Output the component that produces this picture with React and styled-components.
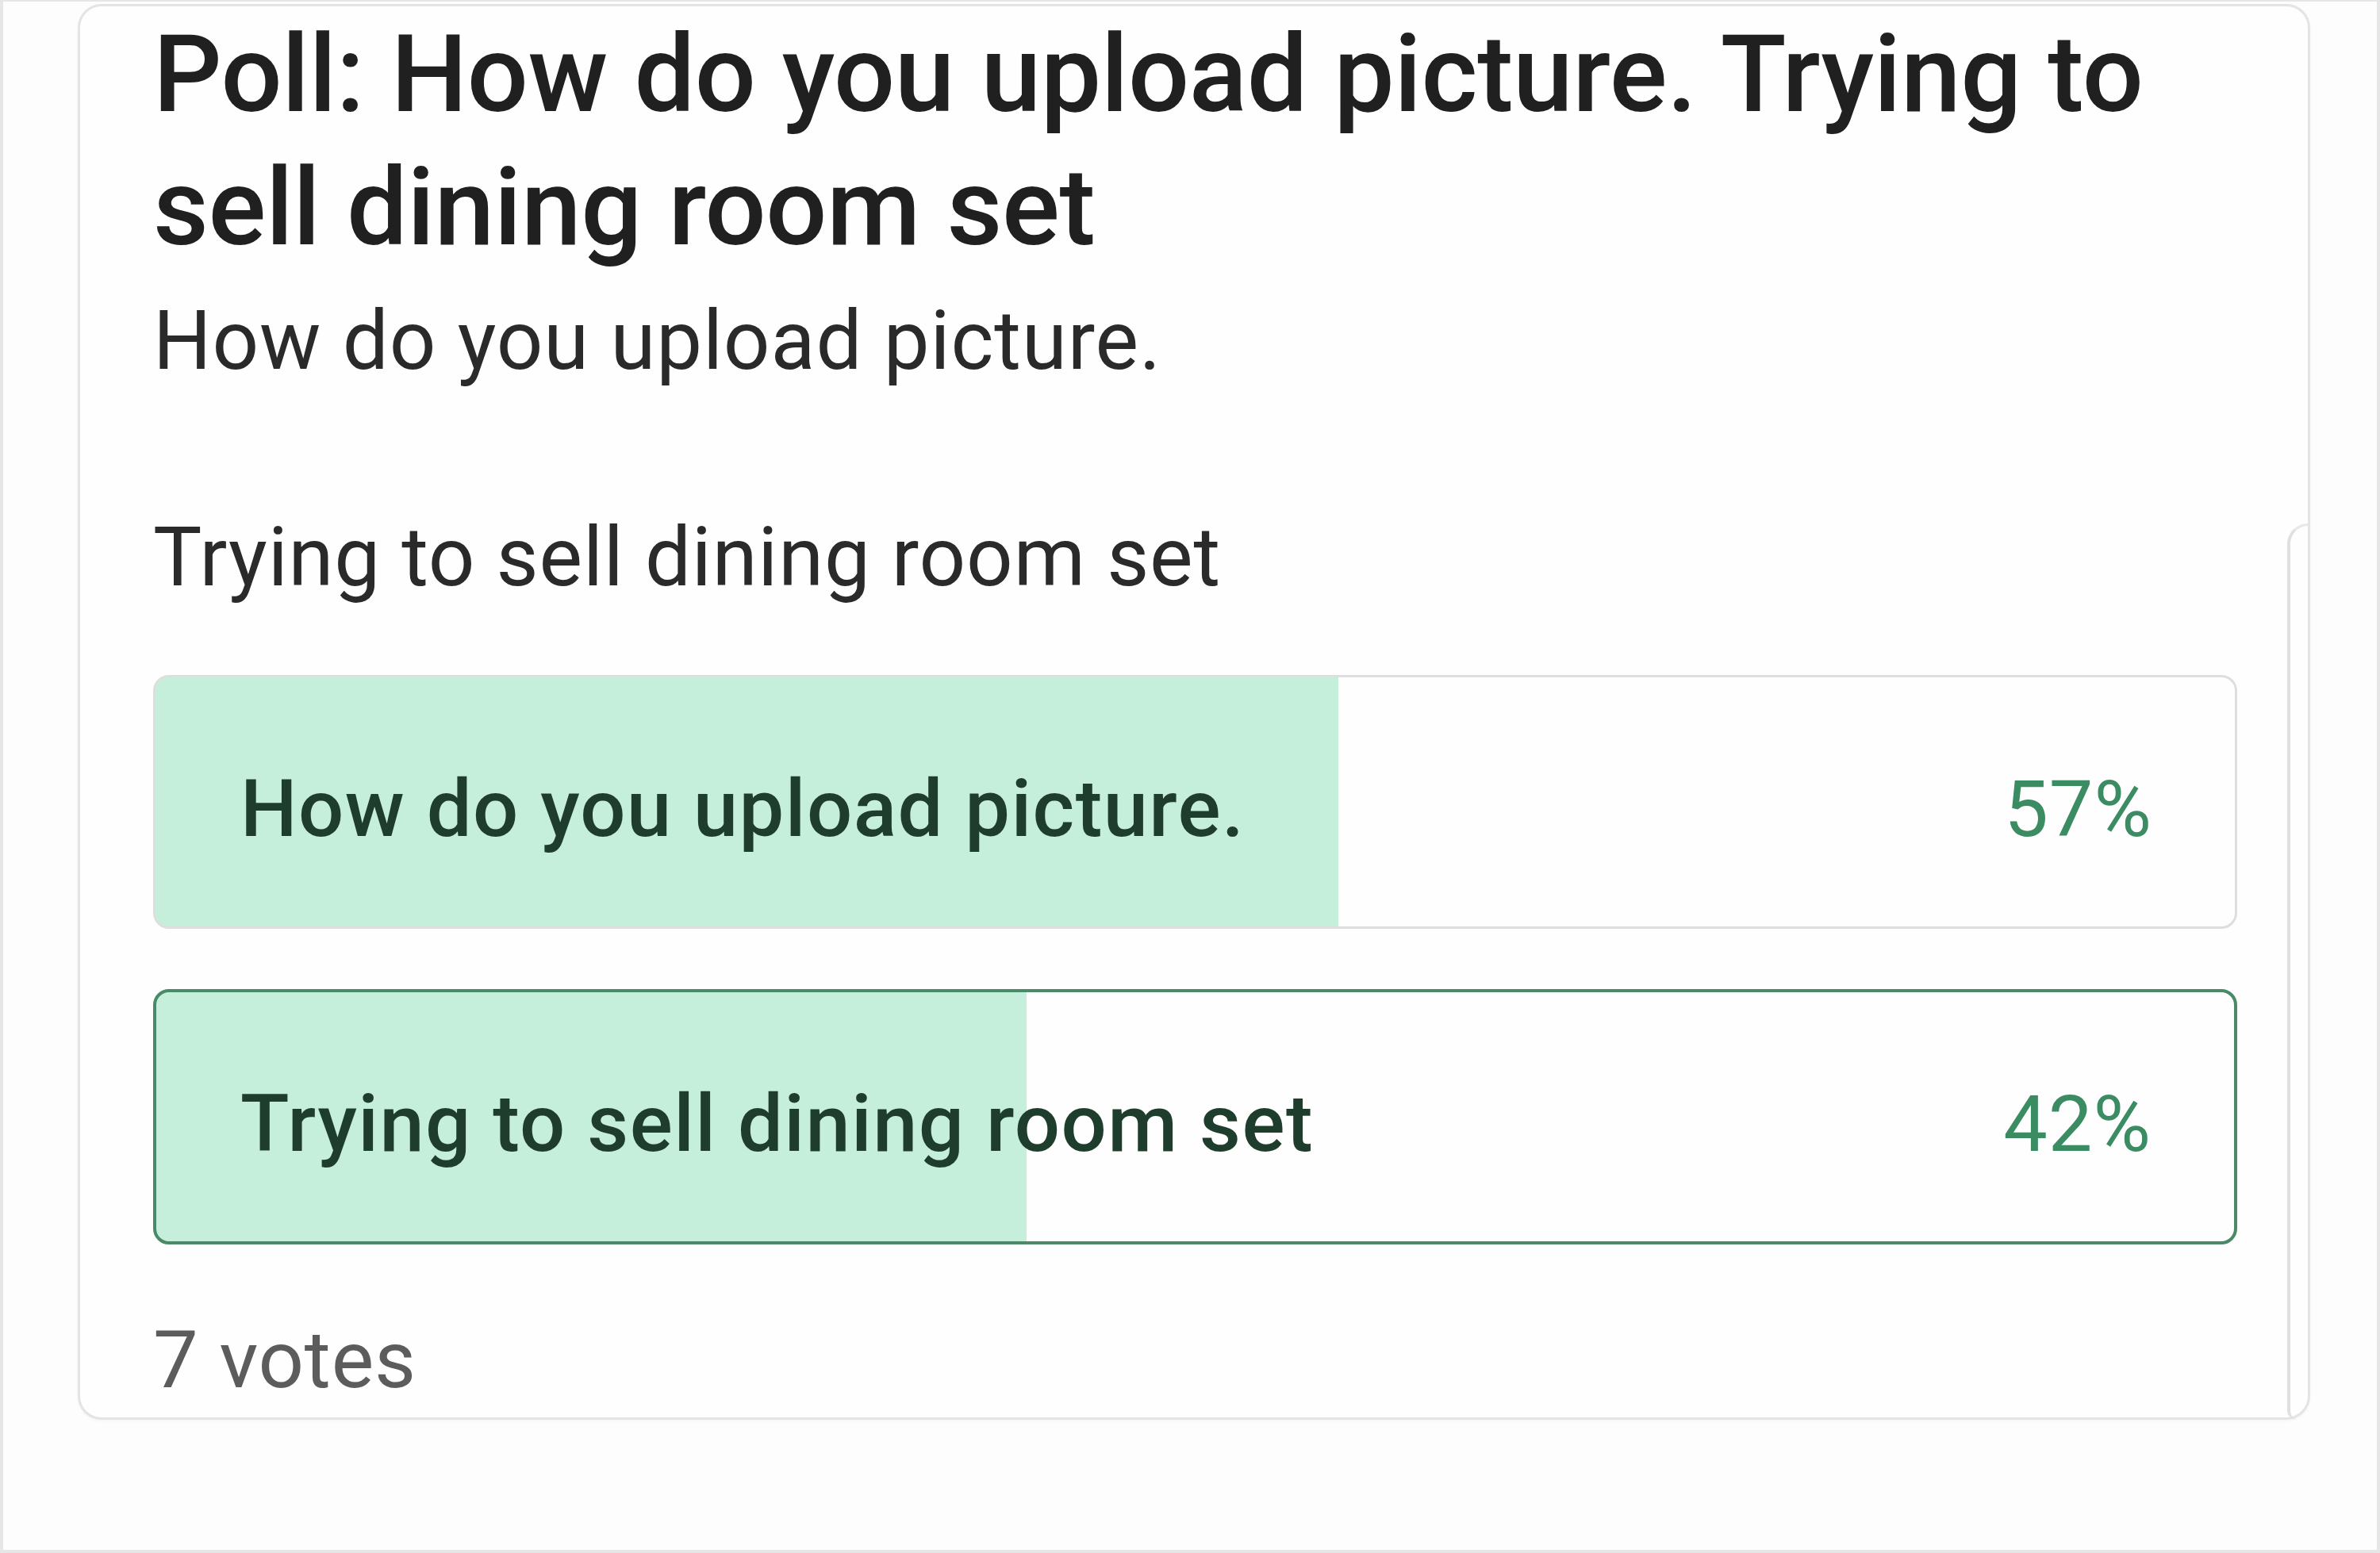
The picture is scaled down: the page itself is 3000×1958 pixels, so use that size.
import styled, { createGlobalStyle } from "styled-components";

const GlobalStyle = createGlobalStyle`
    body{
        margin: 0;
        background: #ffffff;
        font-family: Roboto, "Noto Sans", "Liberation Sans", sans-serif;
    }
`;

const Frame = styled.div`
    box-sizing: border-box;
    width: 3000px;
    height: 1958px;
    border: 4px solid #e6e6e6;
    border-top-width: 2px;
    background: #fdfdfd;
    padding: 0 84px 0 94px;
`;

const Card = styled.div`
    position: relative;
    box-sizing: border-box;
    display: flex;
    flex-direction: column;
    border: 3px solid #e4e4e4;
    border-radius: 30px;
    background: #fefefe;
    padding: 2px 89px 12px 92px;
    margin-top: 3px;
    box-shadow: 0 2px 4px rgba(0,0,0,0.03);

    /* the odd inner edge on the right of the original shot */
    &::after{
        content: "";
        position: absolute;
        right: 0;
        top: 652px;
        bottom: -3px;
        width: 22px;
        border-left: 4px solid #e0e0e0;
        border-top: 3px solid #e8e8e8;
        border-top-left-radius: 26px;
        border-bottom-left-radius: 12px;
    }
`;

const Title = styled.h1`
    margin: 0;
    font-size: 136px;
    line-height: 168px;
    font-weight: 500;
    color: #202020;
    letter-spacing: -0.4px;
`;

const Subtitle = styled.p`
    margin: 24px 0 0;
    font-size: 103px;
    line-height: 120px;
    color: #2a2a2a;
    letter-spacing: 0.9px;
`;

const Question = styled.p`
    margin: 153px 0 0;
    font-size: 103px;
    line-height: 120px;
    color: #2a2a2a;
    letter-spacing: 0.8px;
`;

const Options = styled.div`
    display: flex;
    flex-direction: column;
    gap: 76px;
    margin-top: 88px;
`;

const Option = styled.div`
    box-sizing: border-box;
    height: ${p => p.$chosen ? 322 : 320}px;
    display: flex;
    align-items: center;
    justify-content: space-between;
    padding: 18px 104px 0 ${p => p.$chosen ? 106 : 107}px;
    border: ${p => p.$chosen ? "4px solid #4a8a68" : "3px solid #dedede"};
    border-radius: 20px;
    background: linear-gradient(to right, #c6efdb ${p => p.$pct}%, #fefefe ${p => p.$pct}%);
`;

const Label = styled.span`
    font-size: 101px;
    line-height: 120px;
    font-weight: 500;
    color: #1f3d2d;
    letter-spacing: 1.4px;
`;

const Percent = styled.span`
    font-size: 99px;
    line-height: 120px;
    color: #3b8c62;
    letter-spacing: 1px;
`;

const Votes = styled.p`
    margin: 86px 0 0;
    font-size: 101px;
    line-height: 120px;
    color: #5c5c5c;
    letter-spacing: 0.8px;
`;

const poll = {
    title: "Poll: How do you upload picture. Trying to sell dining room set",
    body: "How do you upload picture.",
    question: "Trying to sell dining room set",
    options: [
        { text: "How do you upload picture.", pct: 57, fill: 56.9 },
        { text: "Trying to sell dining room set", pct: 42, fill: 41.9, chosen: true },
    ],
    votes: 7,
};

export default function App(){
    return (
        <>
            <GlobalStyle />
            <Frame>
                <Card>
                    <Title>{poll.title}</Title>
                    <Subtitle>{poll.body}</Subtitle>
                    <Question>{poll.question}</Question>
                    <Options>
                        {poll.options.map(o => (
                            <Option key={o.text} $pct={o.fill} $chosen={o.chosen}>
                                <Label>{o.text}</Label>
                                <Percent>{o.pct}%</Percent>
                            </Option>
                        ))}
                    </Options>
                    <Votes>{poll.votes} votes</Votes>
                </Card>
            </Frame>
        </>
    );
}
